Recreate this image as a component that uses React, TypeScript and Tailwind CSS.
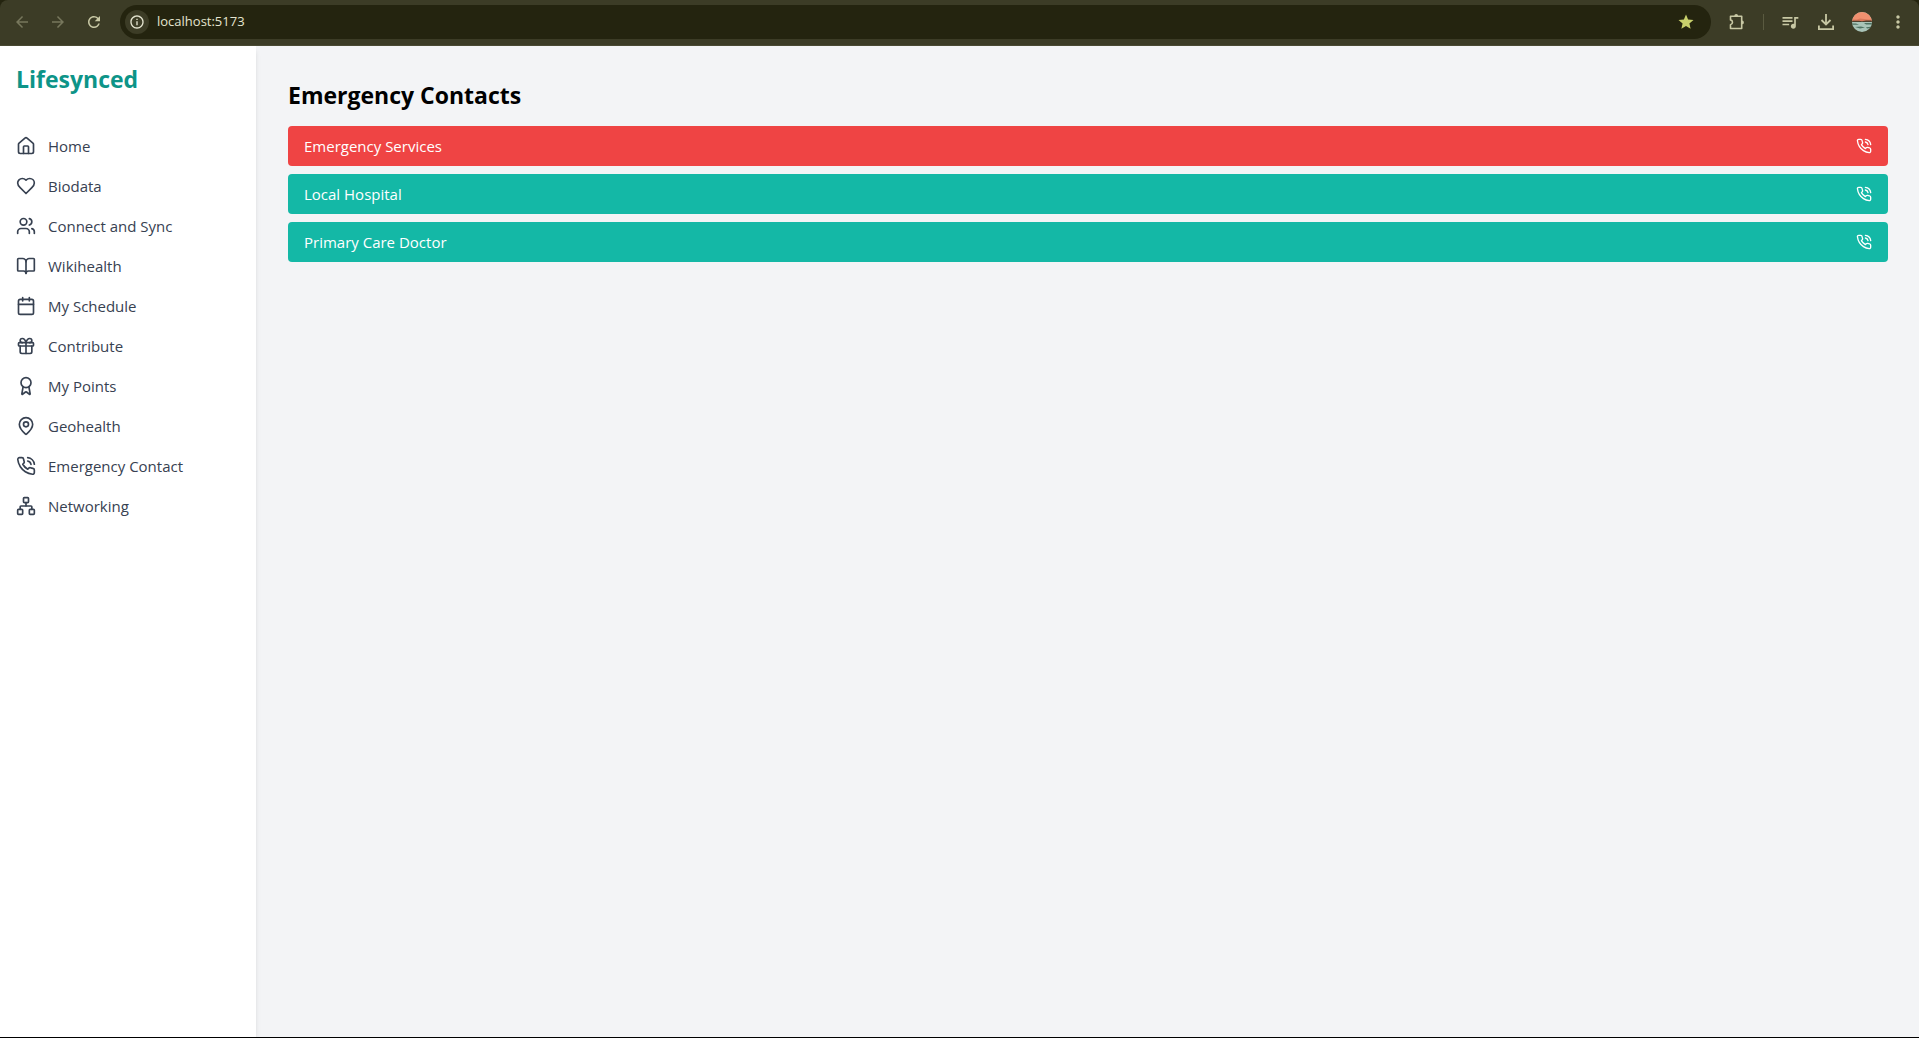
import React from 'react';
import {
  House,
  Users,
  BookOpen,
  Calendar,
  Gift,
  Award,
  MapPin,
  Network,
} from 'lucide-react';
import {
  MdArrowBack,
  MdArrowForward,
  MdInfoOutline,
  MdMoreVert,
  MdQueueMusic,
  MdRefresh,
  MdStar,
} from 'react-icons/md';

interface IconProps {
  size?: number;
  className?: string;
}

const Heart: React.FC<IconProps> = ({ size = 24, className }) => (
  <svg width={size} height={size} viewBox="0 0 24 24" fill="none" stroke="currentColor" strokeWidth={2} strokeLinecap="round" strokeLinejoin="round" className={className}>
    <path d="M19 14c1.490-1.460 3-3.210 3-5.500A5.500 5.500 0 0 0 16.500 3c-1.760 0-3 .5-4.500 2-1.500-1.500-2.740-2-4.500-2A5.500 5.500 0 0 0 2 8.500c0 2.300 1.500 4.050 3 5.500l7 7Z" />
  </svg>
);

const PhoneCall: React.FC<IconProps> = ({ size = 24, className }) => (
  <svg width={size} height={size} viewBox="0 0 24 24" fill="none" stroke="currentColor" strokeWidth={2} strokeLinecap="round" strokeLinejoin="round" className={className}>
    <path d="M22 16.920v3a2 2 0 0 1-2.180 2 19.790 19.790 0 0 1-8.630-3.070 19.500 19.500 0 0 1-6-6 19.790 19.790 0 0 1-3.070-8.670A2 2 0 0 1 4.110 2h3a2 2 0 0 1 2 1.720 12.840 12.840 0 0 0 .7 2.810 2 2 0 0 1-.45 2.110L8.090 9.910a16 16 0 0 0 6 6l1.270-1.270a2 2 0 0 1 2.110-.45 12.840 12.840 0 0 0 2.810.7A2 2 0 0 1 22 16.920z" />
    <path d="M14.050 2a9 9 0 0 1 8 7.940" />
    <path d="M14.050 6A5 5 0 0 1 18 10" />
  </svg>
);

const Puzzle: React.FC<IconProps> = ({ size = 20 }) => (
  <svg width={size} height={size} viewBox="0 0 20 20" fill="none" stroke="currentColor" strokeWidth={1.6} strokeLinejoin="round">
    <path d="M3.500 4.300h11.200v12.200H3.500v-3.700a2.500 2.500 0 0 0 0-4.900z" />
    <path d="M7.300 4a1.900 1.900 0 0 1 3.800 0zM15 8.500a1.900 1.900 0 0 1 0 3.800z" fill="currentColor" stroke="none" />
  </svg>
);

const Download: React.FC<IconProps> = ({ size = 20 }) => (
  <svg width={size} height={size} viewBox="0 0 20 20" fill="none" stroke="currentColor" strokeWidth={1.800}>
    <path d="M10 2v10M5.500 8l4.500 4.500L14.500 8M2.900 13.500v3.600h14.200v-3.600" />
  </svg>
);

const Avatar = () => (
  <svg viewBox="0 0 20 20" className="w-5 h-5">
    <defs>
      <clipPath id="avatar">
        <circle cx="10" cy="10" r="10" />
      </clipPath>
    </defs>
    <g clipPath="url(#avatar)">
      <rect width="20" height="20" fill="#a9c4b8" />
      <rect width="20" height="9" fill="#f0906f" />
      <path d="M0 7.500h5l3-1 4 .5 4 .5h4v2H0z" fill="#d9785a" />
      <path d="M0 8.700h7l3 .6 4-.9h6v1.600H0z" fill="#4d3f2c" />
      <path d="M0 11.500h4l3 1.200H0zM12 11h8v1.500h-6zM3 15l6-.6 4 1.200-5 .8zM14 15.200l5-.5v1.300l-4 .4z" fill="#4f7363" />
    </g>
  </svg>
);

const navItems = [
  { label: 'Home', icon: House },
  { label: 'Biodata', icon: Heart },
  { label: 'Connect and Sync', icon: Users },
  { label: 'Wikihealth', icon: BookOpen },
  { label: 'My Schedule', icon: Calendar },
  { label: 'Contribute', icon: Gift },
  { label: 'My Points', icon: Award },
  { label: 'Geohealth', icon: MapPin },
  { label: 'Emergency Contact', icon: PhoneCall },
  { label: 'Networking', icon: Network },
];

const contacts = [
  { name: 'Emergency Services', color: 'bg-[#ef4444]' },
  { name: 'Local Hospital', color: 'bg-[#14b8a6]' },
  { name: 'Primary Care Doctor', color: 'bg-[#14b8a6]' },
];

const BrowserBar = () => (
  <header className="bg-[#24240f]">
    <div className="flex items-center h-[46px] pb-px pl-3 pr-[11px] rounded-t-lg bg-[#3c3c26] border-b border-[#4a4a33] text-[#c8c8a4]">
      <div className="flex items-center gap-4 mr-4">
        <button aria-label="Back" className="p-px text-[#77775c]"><MdArrowBack size={18} /></button>
        <button aria-label="Forward" className="p-px text-[#77775c]"><MdArrowForward size={18} /></button>
        <button aria-label="Reload" className="p-px"><MdRefresh size={18} /></button>
      </div>
      <div className="flex flex-1 items-center h-[34px] pl-[5px] pr-4 rounded-full bg-[#24240f]">
        <button aria-label="Site information" className="flex items-center justify-center w-6 h-6 rounded-full bg-[#3c3c26] text-[#e4e4d0]">
          <MdInfoOutline size={16} />
        </button>
        <input
          aria-label="Address"
          defaultValue="localhost:5173"
          className="flex-1 ml-2 bg-transparent text-[13px] text-[#e4e4d0] outline-none"
        />
        <button aria-label="Bookmark" className="text-[#c8d06c]"><MdStar size={18} /></button>
      </div>
      <div className="flex items-center gap-4 ml-4">
        <button aria-label="Extensions"><Puzzle size={20} /></button>
        <div className="w-px h-4 bg-[#5a5a40]" />
        <button aria-label="Media"><MdQueueMusic size={20} /></button>
        <button aria-label="Downloads"><Download size={20} /></button>
        <button aria-label="Profile"><Avatar /></button>
        <button aria-label="Menu"><MdMoreVert size={20} /></button>
      </div>
    </div>
  </header>
);

const Sidebar = () => (
  <aside className="w-64 flex-shrink-0 bg-white shadow-md">
    <div className="p-4">
      <h1 className="text-[23px] leading-[34px] font-bold text-[#0d9488]">Lifesynced</h1>
    </div>
    <nav className="mt-[14px]">
      {navItems.map(({ label, icon: Icon }) => (
        <a key={label} href="#" className="flex items-center px-4 py-2 text-[15px] leading-6 text-[#374151]">
          <Icon size={20} className="mr-3" />
          <span>{label}</span>
        </a>
      ))}
    </nav>
  </aside>
);

export default function App() {
  return (
    <div className="flex flex-col min-h-screen bg-[#f3f4f6] border-b border-black font-['Segoe_UI','Open_Sans',sans-serif]">
      <BrowserBar />
      <div className="flex flex-1">
        <Sidebar />
        <main className="flex-1 py-8 pl-8 pr-[31px]">
          <h2 className="mb-[14px] text-[23px] leading-[34px] font-bold text-black">Emergency Contacts</h2>
          <div className="space-y-2">
            {contacts.map(({ name, color }) => (
              <button
                key={name}
                className={`flex items-center justify-between w-full px-4 py-2 rounded text-[15px] leading-6 text-white ${color}`}
              >
                <span>{name}</span>
                <PhoneCall size={16} />
              </button>
            ))}
          </div>
        </main>
      </div>
    </div>
  );
}
